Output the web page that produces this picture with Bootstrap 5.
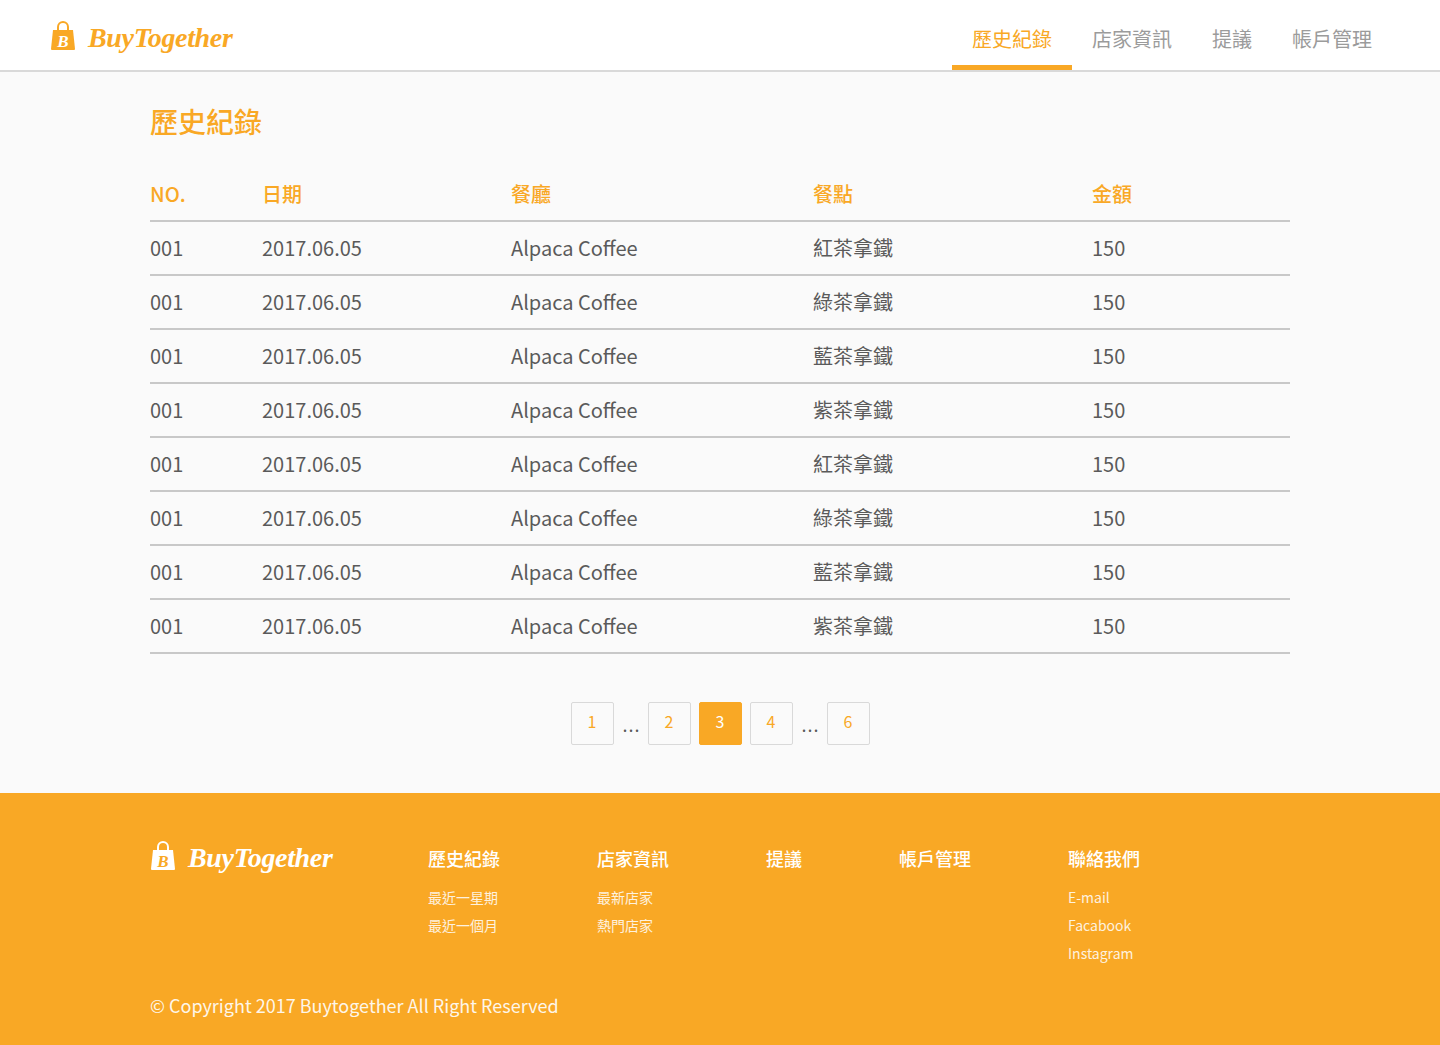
<!DOCTYPE html>
<html lang="zh-Hant">
<head>
    <meta charset="UTF-8">
    <title>歷史紀錄 - BuyTogether</title>
    <link href="https://cdn.jsdelivr.net/npm/bootstrap@5.3.2/dist/css/bootstrap.min.css" rel="stylesheet">
    <style>
        body { background-color: #fafafa; font-family: "Noto Sans CJK TC", "Noto Sans", sans-serif; color: #5a5a5a; }
        .top-bar { height: 72px; background: #fff; border-bottom: 2px solid #d9d9d9; padding: 0 48px 0 50px; }
        .brand-box { gap: 12px; text-decoration: none; }
        .brand-text { font-family: "Liberation Serif", serif; font-style: italic; font-weight: 700; font-size: 28px; line-height: 1; letter-spacing: -.35px; color: #f9a825; padding-top: 4px; }
        .top-link { height: 70px; padding: 0 20px; font-size: 20px; line-height: 78px; color: #9b9b9b; text-decoration: none; }
        .top-link.active-link { color: #f9a825; border-bottom: 5px solid #f9a825; }
        .page-body { width: 1140px; margin: 0 auto; height: 721px; }
        .page-title { font-size: 28px; line-height: 40px; color: #f9a825; padding-top: 29px; margin: 0; height: 99px; font-weight: 500; }
        .history-table { margin: 0; --bs-table-bg: transparent; font-size: 20px; table-layout: fixed; }
        .history-table th, .history-table td { padding: 0; height: 54px; vertical-align: middle; border-bottom: 2px solid #c8c8c8; color: #5a5a5a; font-weight: 400; }
        .history-table th { color: #f9a825; height: 50px; font-weight: 500; padding-bottom: 4px; }
        .pager-box { margin-top: 48px; gap: 8px; }
        .pager-btn { width: 43px; height: 43px; border: 1px solid #d9d9d9; border-radius: 2px; font-size: 16px; color: #f9a825; text-decoration: none; padding-bottom: 6px; }
        .pager-btn.on { background: #f9a825; border-color: #f9a825; color: #fff; }
        .pager-dots { width: 18px; height: 43px; font-size: 18px; line-height: 44px; letter-spacing: 1px; text-align: center; color: #5a5a5a; white-space: nowrap; padding-left: 1px; }
        .site-foot { background: #f9a825; height: 252px; color: #fff; }
        .foot-inner { width: 1140px; margin: 0 auto; padding-top: 47px; }
        .foot-logo { width: 278px; gap: 12px; height: 32px; }
        .foot-logo .brand-text { color: #fff; }
        .foot-col { font-size: 14px; line-height: 28px; }
        .foot-col h6 { font-size: 18px; line-height: 36px; margin: 0 0 7px; font-weight: 500; }
        .foot-col a { display: block; color: #fff; text-decoration: none; opacity: .85; }
        .foot-w1, .foot-w2 { width: 169px; }
        .foot-w3 { width: 133px; }
        .foot-w4 { width: 169px; }
        .foot-copy { font-size: 18px; line-height: 28px; margin-top: 24px; opacity: .9; }
    </style>
</head>
<body>

<!-- header -->
<nav class="top-bar d-flex justify-content-between align-items-start">
    <a href="#" class="brand-box d-flex align-items-center mt-3 pt-1">
        <svg width="26" height="30" viewBox="0 0 26 30">
            <path d="M8 10V6a5 5 0 0 1 10 0v4" fill="none" stroke="#f9a825" stroke-width="2"/>
            <path d="M3 9h20l2 19a1 1 0 0 1-1 1H2a1 1 0 0 1-1-1z" fill="#f9a825"/>
            <text x="13" y="26" text-anchor="middle" font-family="Liberation Serif" font-style="italic" font-weight="700" font-size="17" fill="#fff">B</text>
        </svg>
        <span class="brand-text">BuyTogether</span>
    </a>
    <div class="d-flex">
        <a href="#" class="top-link active-link">歷史紀錄</a>
        <a href="#" class="top-link">店家資訊</a>
        <a href="#" class="top-link">提議</a>
        <a href="#" class="top-link">帳戶管理</a>
    </div>
</nav>

<main class="page-body">
    <h1 class="page-title">歷史紀錄</h1>

    <table class="table history-table">
        <colgroup>
            <col style="width:112px"><col style="width:249px"><col style="width:302px"><col style="width:279px"><col style="width:198px">
        </colgroup>
        <thead>
        <tr><th>NO.</th><th>日期</th><th>餐廳</th><th>餐點</th><th>金額</th></tr>
        </thead>
        <tbody>
        <tr><td>001</td><td>2017.06.05</td><td>Alpaca Coffee</td><td>紅茶拿鐵</td><td>150</td></tr>
        <tr><td>001</td><td>2017.06.05</td><td>Alpaca Coffee</td><td>綠茶拿鐵</td><td>150</td></tr>
        <tr><td>001</td><td>2017.06.05</td><td>Alpaca Coffee</td><td>藍茶拿鐵</td><td>150</td></tr>
        <tr><td>001</td><td>2017.06.05</td><td>Alpaca Coffee</td><td>紫茶拿鐵</td><td>150</td></tr>
        <tr><td>001</td><td>2017.06.05</td><td>Alpaca Coffee</td><td>紅茶拿鐵</td><td>150</td></tr>
        <tr><td>001</td><td>2017.06.05</td><td>Alpaca Coffee</td><td>綠茶拿鐵</td><td>150</td></tr>
        <tr><td>001</td><td>2017.06.05</td><td>Alpaca Coffee</td><td>藍茶拿鐵</td><td>150</td></tr>
        <tr><td>001</td><td>2017.06.05</td><td>Alpaca Coffee</td><td>紫茶拿鐵</td><td>150</td></tr>
        </tbody>
    </table>

    <div class="pager-box d-flex justify-content-center">
        <a href="#" class="pager-btn d-flex align-items-center justify-content-center">1</a>
        <span class="pager-dots">...</span>
        <a href="#" class="pager-btn d-flex align-items-center justify-content-center">2</a>
        <a href="#" class="pager-btn on d-flex align-items-center justify-content-center">3</a>
        <a href="#" class="pager-btn d-flex align-items-center justify-content-center">4</a>
        <span class="pager-dots">...</span>
        <a href="#" class="pager-btn d-flex align-items-center justify-content-center">6</a>
    </div>
</main>

<!-- footer -->
<footer class="site-foot">
    <div class="foot-inner">
        <div class="d-flex">
            <div class="foot-logo d-flex align-items-center">
                <svg width="26" height="30" viewBox="0 0 26 30">
                    <path d="M8 10V6a5 5 0 0 1 10 0v4" fill="none" stroke="#fff" stroke-width="2"/>
                    <path d="M3 9h20l2 19a1 1 0 0 1-1 1H2a1 1 0 0 1-1-1z" fill="#fff"/>
                    <text x="13" y="26" text-anchor="middle" font-family="Liberation Serif" font-style="italic" font-weight="700" font-size="17" fill="#f9a825">B</text>
                </svg>
                <span class="brand-text">BuyTogether</span>
            </div>
            <div class="foot-col foot-w1"><h6>歷史紀錄</h6><a href="#">最近一星期</a><a href="#">最近一個月</a></div>
            <div class="foot-col foot-w2"><h6>店家資訊</h6><a href="#">最新店家</a><a href="#">熱門店家</a></div>
            <div class="foot-col foot-w3"><h6>提議</h6></div>
            <div class="foot-col foot-w4"><h6>帳戶管理</h6></div>
            <div class="foot-col"><h6>聯絡我們</h6><a href="#">E-mail</a><a href="#">Facabook</a><a href="#">Instagram</a></div>
        </div>
        <div class="foot-copy">© Copyright 2017 Buytogether All Right Reserved</div>
    </div>
</footer>

<script src="https://cdn.jsdelivr.net/npm/bootstrap@5.3.2/dist/js/bootstrap.bundle.min.js"></script>
</body>
</html>
